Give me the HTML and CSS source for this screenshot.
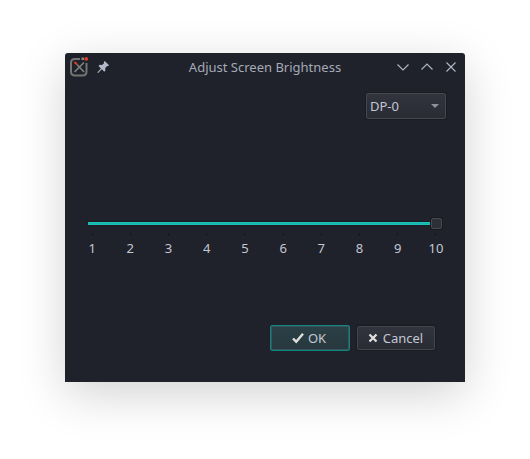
FILE: index.html
```html
<!DOCTYPE html>
<html lang="en">
<head>
<meta charset="utf-8">
<title>Adjust Screen Brightness</title>
<link rel="stylesheet" href="styles.css">
</head>
<body>
<main class="window">
  <header class="titlebar">
    <div class="titlebar-side titlebar-start">
      <svg class="app-icon" viewBox="0 0 20 20" width="20" height="20" aria-hidden="true">
        <path d="M11 2H6Q2 2 2 6v8.500q0 4 4 4h7.500q4 0 4-4V6" fill="none" stroke="#747674" stroke-width="2"/>
        <path d="M5.500 15L15 5.500M8 7.500l7 7.500" fill="none" stroke="#80827f" stroke-width="1.600"/>
        <path d="M5.500 5l2.500 2.500" stroke="#e03a2a" stroke-width="1.900"/>
        <circle cx="13.800" cy="1.800" r="1.500" fill="#858783"/>
        <circle cx="17.300" cy="1.900" r="1.800" fill="#f03a29"/>
      </svg>
      <button class="title-button" type="button" aria-label="Keep on all desktops">
        <svg viewBox="0 0 14 14" width="14" height="14"><path d="M8.800 1L13 5.200L12 6.300L11 6.100L9.200 8.200L9.400 10.500L8.300 11.700L5.800 9.300L2.200 13L1.300 12.600L4.900 8.400L2.500 6L3.700 4.800L6 5L8 3.200L7.800 2Z" fill="#b4b8c8"/></svg>
      </button>
    </div>
    <h1 class="title">Adjust Screen Brightness</h1>
    <div class="titlebar-side titlebar-end">
      <button class="title-button" type="button" aria-label="Minimize">
        <svg class="line-icon" viewBox="0 0 14 14" width="14" height="14"><path d="M1.500 4.500L7 10l5.500-5.500"/></svg>
      </button>
      <button class="title-button" type="button" aria-label="Maximize">
        <svg class="line-icon" viewBox="0 0 14 14" width="14" height="14"><path d="M1.500 9.500L7 4l5.500 5.500"/></svg>
      </button>
      <button class="title-button" type="button" aria-label="Close">
        <svg class="line-icon" viewBox="0 0 14 14" width="14" height="14"><path d="M2.500 2.500l9 9M11.500 2.500l-9 9"/></svg>
      </button>
    </div>
  </header>
  <form class="content">
    <div class="display-row">
      <div class="combo">
        <select class="combo-select" aria-label="Display"><option>DP-0</option></select>
        <svg class="combo-arrow" viewBox="0 0 8 4" width="8" height="4" aria-hidden="true"><path d="M0 0h8L4 4z" fill="#8e919b"/></svg>
      </div>
    </div>
    <div class="scale">
      <input class="slider" type="range" min="1" max="10" value="10" aria-label="Brightness">
      <ol class="ticks">
        <li>1</li><li>2</li><li>3</li><li>4</li><li>5</li><li>6</li><li>7</li><li>8</li><li>9</li><li>10</li>
      </ol>
    </div>
    <div class="actions">
      <button class="button button-default" type="submit">
        <svg viewBox="0 0 12 12" width="12" height="12" aria-hidden="true"><path d="M1 6.500L4.200 9.700L11 1.700" fill="none" stroke="#dfe0dc" stroke-width="2.400"/></svg>
        <span>OK</span>
      </button>
      <button class="button" type="button">
        <svg viewBox="0 0 12 12" width="12" height="12" aria-hidden="true"><path d="M2.500 2.500l7 7M9.500 2.500l-7 7" fill="none" stroke="#dfe0dc" stroke-width="2.300"/></svg>
        <span>Cancel</span>
      </button>
    </div>
  </form>
</main>
</body>
</html>
```

FILE: styles.css
```css
* {
  box-sizing: border-box;
}

body {
  display: flex;
  min-height: 100vh;
  margin: 0;
  padding: 53px 65px 77px;
  background: #fff;
  color: #c4c7d4;
  font: 13px/18px "Noto Sans", sans-serif;
}

button,
select {
  font: inherit;
  color: inherit;
}

.window {
  display: flex;
  flex: 1;
  flex-direction: column;
  background: #1f222a;
  border-radius: 3px 3px 0 0;
  box-shadow: 0 12px 48px rgba(0, 0, 0, 0.18);
}

.titlebar {
  display: grid;
  grid-template-columns: 1fr auto 1fr;
  align-items: center;
  height: 28px;
  padding: 0 2px;
  color: #a6aab8;
}

.titlebar-side {
  display: flex;
  align-items: center;
}

.titlebar-start {
  gap: 2px;
  padding-left: 2px;
}

.titlebar-end {
  justify-content: flex-end;
}

.title {
  margin: 0;
  font-size: 13px;
  font-weight: 400;
}

.title-button {
  display: flex;
  align-items: center;
  justify-content: center;
  width: 24px;
  height: 24px;
  padding: 0;
  border: 0;
  background: none;
}

.line-icon {
  fill: none;
  stroke: #b4b8c6;
  stroke-width: 1.1;
}

.content {
  display: flex;
  flex: 1;
  flex-direction: column;
  padding: 12px 0 31px;
}

.display-row {
  display: flex;
  justify-content: flex-end;
  padding-right: 19px;
}

.combo {
  position: relative;
}

.combo-select {
  display: block;
  width: 80px;
  height: 26px;
  padding: 0 3px;
  appearance: none;
  border: 1px solid #454850;
  border-radius: 2px;
  background: linear-gradient(#31343d, #292c34);
  box-shadow: 0 0 0 1px #191b21;
}

.combo-arrow {
  position: absolute;
  top: 11px;
  right: 7px;
  pointer-events: none;
}

.scale {
  display: flex;
  flex: 1;
  flex-direction: column;
  justify-content: center;
  padding: 31px 10px 0 8px;
}

.slider {
  height: 11px;
  margin: 0 13px 0 15px;
  appearance: none;
  background: none;
}

.slider::-webkit-slider-runnable-track {
  height: 3px;
  background: linear-gradient(#20c9bf, #16b5ad, #20c9bf);
  box-shadow: 0 0 0 1px #1b1d23;
}

.slider::-webkit-slider-thumb {
  width: 11px;
  height: 11px;
  margin-top: -4px;
  appearance: none;
  border: 1px solid #474a52;
  border-radius: 2px;
  background: #2d3038;
  box-shadow: 0 0 0 1px #181a20;
}

.ticks {
  display: grid;
  grid-template-columns: repeat(10, 1fr);
  margin: 0;
  padding: 4px 0 0;
  list-style: none;
  text-align: center;
}

.ticks li::before {
  content: "";
  display: block;
  width: 1px;
  height: 3px;
  margin: 0 auto 3px;
  background: #14161b;
}

.actions {
  display: flex;
  align-items: center;
  justify-content: flex-end;
  gap: 7px;
  padding-right: 30px;
}

.button {
  display: flex;
  align-items: center;
  justify-content: center;
  gap: 4px;
  width: 78px;
  height: 24px;
  padding: 0 2px 0 0;
  border: 1px solid #43464e;
  border-radius: 2px;
  background: linear-gradient(#31343d, #292c34);
  box-shadow: 0 0 0 1px #191b21;
}

.button-default {
  width: 80px;
  height: 26px;
  border-color: #0e8580;
  background: linear-gradient(#2b4047, #27383e);
  box-shadow: inset 0 0 0 1px #39545a;
}
```
